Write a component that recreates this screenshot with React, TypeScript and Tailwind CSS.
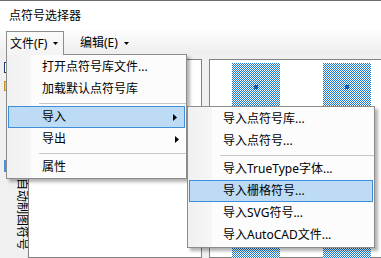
import React from "react";

const mainItems = [
  { name: "打开点符号库文件..." },
  { name: "加载默认点符号库" },
  { sep: true },
  { name: "导入", sub: true, active: true },
  { name: "导出", sub: true },
  { sep: true },
  { name: "属性" },
];

const importItems = [
  { name: "导入点符号库..." },
  { name: "导入点符号..." },
  { sep: true },
  { name: "导入TrueType字体..." },
  { name: "导入栅格符号...", active: true },
  { name: "导入SVG符号..." },
  { name: "导入AutoCAD文件..." },
];

type Item = { name?: string; sep?: boolean; sub?: boolean; active?: boolean };

const SubArrow = () => (
  <svg width="4" height="7" viewBox="0 0 4 7" className="ml-auto mr-[7px]">
    <path d="M0 0 L4 3.5 L0 7 Z" fill="#000" />
  </svg>
);

const DropArrow = () => (
  <svg width="5" height="3" viewBox="0 0 5 3">
    <path d="M0 0 H5 L2.5 3 Z" fill="#000" />
  </svg>
);

const MenuList = ({ items }: { items: Item[] }) => (
  <>
    {items.map((item, i) =>
      item.sep ? (
        <div key={i} className="h-[6px] flex items-center pl-[32px]">
          <div className="h-px flex-1 bg-[#c8c8c8]" />
        </div>
      ) : item.active ? (
        <div
          key={i}
          className="h-[22px] mx-[1px] flex items-center pl-[33px] border border-[#3d8fdc] bg-[#bddbf5]"
        >
          <span>{item.name}</span>
          {item.sub && <SubArrow />}
        </div>
      ) : (
        <div key={i} className="h-[22px] flex items-center pl-[35px]">
          <span>{item.name}</span>
          {item.sub && <SubArrow />}
        </div>
      )
    )}
  </>
);

const CheckerSymbol = ({ id }: { id: string }) => (
  <svg width="48" height="48" viewBox="0 0 48 48" shapeRendering="crispEdges">
    <defs>
      <pattern id={id} width="2" height="2" patternUnits="userSpaceOnUse">
        <rect width="1" height="1" fill="#1677d6" />
        <rect x="1" y="1" width="1" height="1" fill="#1677d6" />
      </pattern>
    </defs>
    <rect width="48" height="48" fill="#fff" />
    <rect width="48" height="48" fill={`url(#${id})`} />
    <rect x="22" y="22" width="4" height="4" fill="#0b5cb0" />
  </svg>
);

export default function App() {
  return (
    <div className="relative w-[381px] h-[258px] overflow-hidden bg-white border-t border-[#6f6f6f] text-[12px] leading-none text-black font-['Noto_Sans','Noto_Sans_CJK_SC',sans-serif]">
      {/* title */}
      <div className="h-[29px] flex items-center pl-[9px]">点符号选择器</div>

      {/* menu bar */}
      <div className="h-[25px] flex items-start bg-gradient-to-b from-[#fdfdfd] to-[#ededed]">
        <div className="relative z-20 ml-[6px] mt-[1px] h-[24px] w-[58px] flex items-center pl-[3px] border border-b-0 border-[#8e8e8e] bg-gradient-to-b from-[#fafafa] to-[#f4f4f4]">
          <span>文件(F)</span>
          <span className="ml-[6px] flex">
            <DropArrow />
          </span>
        </div>
        <div className="mt-[1px] h-[24px] flex items-center ml-[16px]">
          <span>编辑(E)</span>
          <span className="ml-[6px] flex">
            <DropArrow />
          </span>
        </div>
      </div>

      {/* body */}
      <div className="flex h-[203px] bg-[#f0f0f0] pt-[4px]">
        <div className="w-[28px] flex flex-col pl-[4px]">
          <div className="mt-[3px] w-[12px] h-[11px] border border-[#1d3b6e] bg-white" />
          <div className="mt-[8px] w-[12px] h-[10px] bg-[#f2c14e] border border-[#c99526]" />
          <div className="mt-[3px] ml-[1px] h-[48px] leading-[12px] [writing-mode:vertical-rl] [text-orientation:sideways]">
            点符号库
          </div>
          <div className="mt-[18px] w-[12px] h-[12px] bg-[#4a8fe0]" />
          <div className="mt-[6px] ml-[1px] leading-[12px] [writing-mode:vertical-rl] [text-orientation:sideways]">
            自动制图符号
          </div>
        </div>
        <div className="w-[174px] border border-[#828282] bg-white" />
        <div className="ml-[7px] flex-1 border border-r-0 border-[#828282] bg-white">
          <div className="grid grid-cols-[48px_48px] gap-x-[43px] gap-y-[13px] pl-[22px] pt-[3px]">
            {Array.from({ length: 8 }).map((_, i) => (
              <CheckerSymbol key={i} id={`ck${i}`} />
            ))}
          </div>
        </div>
      </div>

      {/* file menu */}
      <div className="absolute z-10 left-[6px] top-[53px] w-[181px] pt-[1px] border border-[#8c8c8c] bg-[linear-gradient(to_right,#f0f0f0_0px,#f6f6f6_24px,#fcfcfc_24px)] shadow-[3px_3px_3px_rgba(0,0,0,0.3)]">
        <MenuList items={mainItems} />
      </div>

      {/* import submenu */}
      <div className="absolute z-30 left-[187px] top-[105px] w-[188px] py-[1px] border border-[#8c8c8c] bg-[linear-gradient(to_right,#f0f0f0_0px,#f6f6f6_24px,#fcfcfc_24px)] shadow-[3px_3px_3px_rgba(0,0,0,0.3)]">
        <MenuList items={importItems} />
      </div>
    </div>
  );
}
